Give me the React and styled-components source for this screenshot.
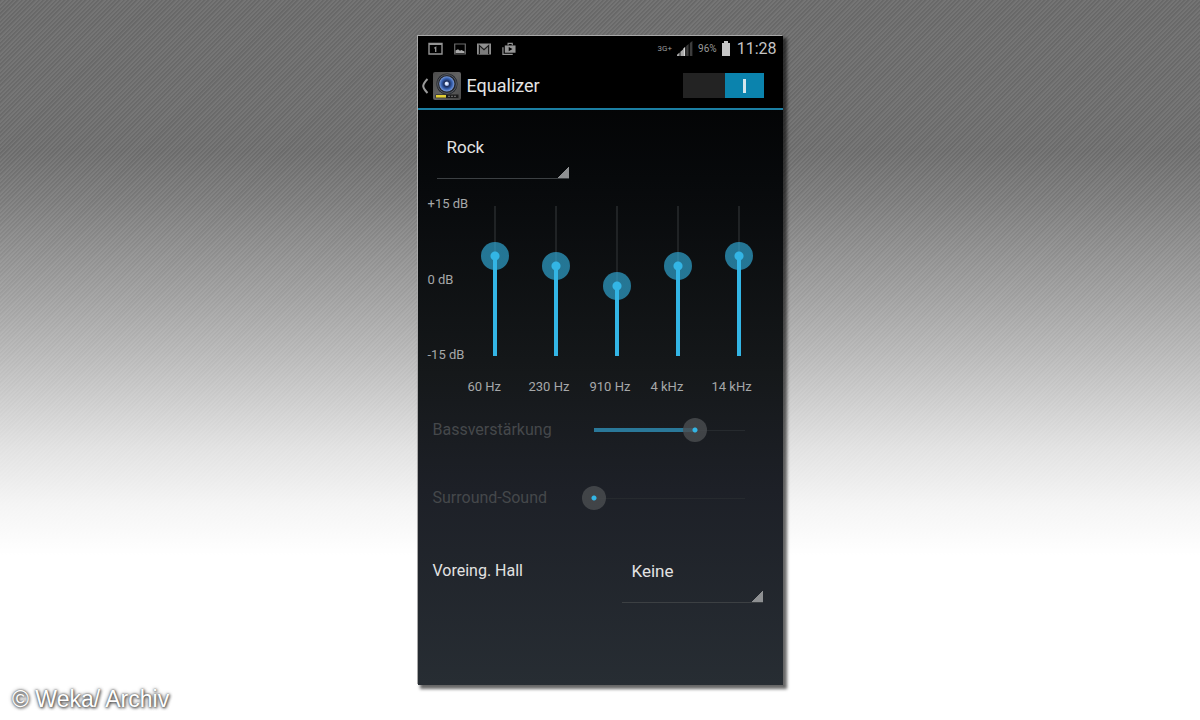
import React, { useState } from "react";
import styled, { createGlobalStyle } from "styled-components";

const GlobalStyle = createGlobalStyle`
  * {
    box-sizing: border-box;
  }
  body {
    margin: 0;
    font-family: Roboto, "Noto Sans", sans-serif;
  }
`;

const Page = styled.div`
  min-height: 100vh;
  padding: 36px 12px 8px;
  display: flex;
  flex-direction: column;
  justify-content: space-between;
  background: linear-gradient(
      rgba(255, 255, 255, 0) 0%,
      rgba(255, 255, 255, 0.02) 21%,
      rgba(255, 255, 255, 0.12) 28%,
      rgba(255, 255, 255, 0.36) 41%,
      rgba(255, 255, 255, 0.52) 49%,
      rgba(255, 255, 255, 0.8) 62%,
      rgba(255, 255, 255, 0.93) 70%,
      rgba(255, 255, 255, 1) 77%
    ),
    repeating-linear-gradient(
      135deg,
      #686868 0,
      #686868 1px,
      #757575 2px,
      #757575 3px
    );
`;
const Phone = styled.main`
  width: 100%;
  max-width: 365px;
  margin: 0 auto;
  background: linear-gradient(#000 0%, #07090b 22%, #15181a 52%, #1d2027 70%, #272d33 100%);
  box-shadow: -1px -1px 0 #a8a8a8, 3px 3px 3px 1px rgba(0, 0, 0, 0.6);
`;
const StatusBar = styled.div`
  height: 25px;
  padding: 0 6px 0 10px;
  display: flex;
  align-items: center;
  justify-content: space-between;
  background: #000;
`;
const StatusGroup = styled.div`
  display: flex;
  align-items: center;
  gap: ${(props) => props.$gap}px;
  color: #949494;
`;
const StatusText = styled.span`
  font-size: ${(props) => (props.$small ? 8 : 10)}px;
  line-height: 24px;
  color: #9a9a9a;
`;
const Clock = styled.time`
  margin-left: 2px;
  font-size: 16px;
  line-height: 24px;
  color: #c4c4c4;
`;
const ActionBar = styled.header`
  height: 49px;
  padding: 2px 19px 0 3px;
  display: flex;
  align-items: center;
  background: #000;
  border-bottom: 2px solid #1b7fa3;
`;
const BackButton = styled.button`
  display: flex;
  align-items: center;
  gap: 3px;
  padding: 0;
  border: none;
  background: none;
`;
const Title = styled.h1`
  flex: 1;
  margin: 0 0 0 6px;
  font-size: 18px;
  font-weight: 400;
  line-height: 24px;
  color: #e4e4e4;
`;
const Switch = styled.input`
  appearance: none;
  width: 81px;
  height: 25px;
  margin: 0;
  display: flex;
  justify-content: ${(props) => (props.checked ? "flex-end" : "flex-start")};
  background: #232323;

  &::before {
    content: "";
    width: 39px;
    background: linear-gradient(#d4e6ec, #d4e6ec) center / 3px 14px no-repeat,
      ${(props) => (props.checked ? "#0b83ad" : "#555")};
  }
`;
const Body = styled.div`
  padding: 24px 10px 82px;
`;
const Spinner = styled.select`
  appearance: none;
  display: block;
  width: ${(props) => props.$width}px;
  height: 45px;
  margin: 0;
  padding: 0 12px 18px 10px;
  border: none;
  border-bottom: 1px solid #3c4043;
  border-radius: 0;
  outline: none;
  background: linear-gradient(135deg, transparent 50%, #8e9092 54%) right bottom /
    12px 12px no-repeat;
  font-family: inherit;
  font-size: 17px;
  color: #e2e2e2;

  option {
    background: #1d2027;
  }
`;
const PresetRow = styled.div`
  padding-left: 9px;
  margin-bottom: 13px;
`;
const Bands = styled.div`
  display: flex;
`;
const Scale = styled.div`
  width: 40px;
  height: 175px;
  display: flex;
  flex-direction: column;
  justify-content: space-between;
  font-size: 13px;
  line-height: 24px;
  white-space: nowrap;
  color: #a6a8a9;
`;
const Band = styled.label`
  width: 61px;
  display: flex;
  flex-direction: column;
  font-size: 13px;
  line-height: 34px;
  color: #a6a8a9;
`;
const BandSlider = styled.input`
  appearance: none;
  writing-mode: vertical-lr;
  direction: rtl;
  width: 28px;
  height: 178px;
  margin: 0 0 0 13px;
  background: linear-gradient(#33b5e5, #33b5e5) center bottom 14px / 4px
      calc(var(--level) * 150px) no-repeat,
    linear-gradient(#202325, #202325) center / 2px 150px no-repeat;

  &::-webkit-slider-thumb {
    appearance: none;
    width: 28px;
    height: 28px;
    border-radius: 50%;
    background: radial-gradient(
      circle,
      #33b5e5 4px,
      rgba(51, 181, 229, 0.62) 5px
    );
  }
`;
const EffectRow = styled.div`
  height: ${(props) => props.$height}px;
  padding-left: 5px;
  display: flex;
  align-items: center;
`;
const EffectLabel = styled.label`
  width: ${(props) => (props.$wide ? 189 : 149)}px;
  font-size: 16px;
  line-height: 26px;
  color: ${(props) => (props.$dim ? "#45484b" : "#e2e2e2")};
`;
const EffectSlider = styled.input`
  appearance: none;
  width: 175px;
  height: 24px;
  margin: 0;
  background: linear-gradient(#2a7899, #2a7899) left 12px center /
      calc(var(--level) * 151px) 4px no-repeat,
    linear-gradient(#262a2e, #262a2e) center / 151px 1px no-repeat;

  &::-webkit-slider-thumb {
    appearance: none;
    width: 24px;
    height: 24px;
    border-radius: 50%;
    background: radial-gradient(
      circle,
      #33b5e5 1px,
      #33b5e5 2px,
      rgba(74, 77, 80, 0.8) 3px
    );
  }
`;
const ReverbRow = styled.div`
  margin-top: 18px;
  padding-left: 5px;
  display: flex;
  align-items: flex-start;
`;
const Credit = styled.footer`
  font-family: "Liberation Sans", Arial, sans-serif;
  font-size: 23px;
  line-height: 28px;
  color: #fff;
  text-shadow: 0 0 2px #555, 1px 1px 3px #444, 0 0 4px #888;
`;

function CalendarIcon() {
  return (
    <svg width="15" height="13" viewBox="0 0 15 13" fill="none" aria-hidden="true">
      <path d="M1 1.5h13v10.5H1z" stroke="currentColor" strokeWidth="1.4" />
      <path d="M1 1h13v2H1z" fill="currentColor" />
      <path d="M6.3 6.2l1.4-.8V10" stroke="currentColor" strokeWidth="1.3" />
    </svg>
  );
}

function PictureIcon() {
  return (
    <svg width="12" height="12" viewBox="0 0 12 12" fill="none" aria-hidden="true">
      <path d="M.7 1h10.6v10H.7z" stroke="#6c6c6c" strokeWidth="1.2" />
      <path d="M1.5 10V7.6L4 6.2l2 1.6 1.4-.8 3.1 1.4V10z" fill="#aaa" />
    </svg>
  );
}

function MailIcon() {
  return (
    <svg width="14" height="12" viewBox="0 0 14 12" aria-hidden="true">
      <path d="M0 .5h14v11H0z" fill="#8f8f8f" />
      <path d="M2.6 11.5V3.4L7 7.2l4.4-3.8v8.1z" fill="#7c7c7c" />
      <path d="M2.4 11V2.6L7 6.8l4.6-4.2V11" fill="none" stroke="#1b1b1b" strokeWidth="1.2" />
    </svg>
  );
}

function PlayStoreIcon() {
  return (
    <svg width="14" height="14" viewBox="0 0 15 14" fill="none" aria-hidden="true">
      <path d="M1 5v7.8h10.5" stroke="currentColor" strokeWidth="1.3" />
      <path d="M3 3.2h11.5v7.8H3z" fill="currentColor" />
      <path d="M6.5 3V1h4.5v2" stroke="currentColor" strokeWidth="1.2" />
      <path d="M7.2 4.8v4.6l4-2.3z" fill="#000" />
    </svg>
  );
}

function SignalIcon() {
  return (
    <svg width="16" height="15" viewBox="0 0 16 15" aria-hidden="true">
      <path d="M0 15h2.6v-3.4L0 13.8zM3.4 15H6V8.4l-2.6 2.4z" fill="#a8a8a8" />
      <path d="M6.2 15h2V5.8l-2 2z" fill="#d8d8d8" />
      <path d="M9.2 15h2.4V3L9.2 5zM12.8 15h2.6V0l-2.6 2z" fill="#3d3d3d" />
    </svg>
  );
}

function BatteryIcon() {
  return (
    <svg width="8" height="15" viewBox="0 0 8 15" aria-hidden="true">
      <path d="M2 0h4v2h2v13H0V2h2z" fill="#c6c6c6" />
    </svg>
  );
}

function BackIcon() {
  return (
    <svg width="9" height="16" viewBox="0 0 9 16" fill="none" aria-hidden="true">
      <path d="M6.5 1Q2.6 5 2.2 8q.4 3 4.3 7" stroke="#999" strokeWidth="2" />
    </svg>
  );
}

function SpeakerIcon() {
  return (
    <svg width="28" height="28" viewBox="0 0 28 28" aria-hidden="true">
      <defs>
        <linearGradient id="case" x1="0" y1="0" x2="1" y2="1">
          <stop offset="0" stopColor="#4c4c4c" />
          <stop offset="0.5" stopColor="#626262" />
          <stop offset="1" stopColor="#484848" />
        </linearGradient>
        <radialGradient id="cone">
          <stop offset="0" stopColor="#dce6fa" />
          <stop offset="0.22" stopColor="#9db6e6" />
          <stop offset="0.36" stopColor="#1c2c58" />
          <stop offset="0.7" stopColor="#3560b0" />
          <stop offset="1" stopColor="#7d9cda" />
        </radialGradient>
      </defs>
      <rect width="28" height="28" rx="2" fill="url(#case)" />
      <circle cx="14" cy="12" r="10.6" fill="#23262c" />
      <circle cx="14" cy="12" r="9.4" fill="none" stroke="#70747c" strokeWidth="0.7" />
      <circle cx="13.8" cy="11.8" r="7.6" fill="url(#cone)" />
      <circle cx="13.4" cy="11.4" r="1.4" fill="#eef3ff" />
      <rect x="2.5" y="22.5" width="23" height="3.6" fill="#1c1c1c" />
      <rect x="3" y="23" width="10" height="2.6" fill="#e3cf35" />
      <path d="M15 24.3h9" stroke="#777" strokeWidth="1" strokeDasharray="2 1" />
    </svg>
  );
}

const initialBands = [
  { name: "60 Hz", gain: 5 },
  { name: "230 Hz", gain: 3 },
  { name: "910 Hz", gain: -1 },
  { name: "4 kHz", gain: 3 },
  { name: "14 kHz", gain: 5 },
];

export default function App() {
  const [enabled, setEnabled] = useState(true);
  const [bands, setBands] = useState(initialBands);
  const [bass, setBass] = useState(67);
  const [surround, setSurround] = useState(0);

  const handleBand = (index, gain) => {
    setBands(bands.map((band, i) => (i === index ? { ...band, gain } : band)));
  };

  return (
    <>
      <GlobalStyle />
      <Page>
        <Phone>
          <StatusBar>
            <StatusGroup $gap={11}>
              <CalendarIcon />
              <PictureIcon />
              <MailIcon />
              <PlayStoreIcon />
            </StatusGroup>
            <StatusGroup $gap={5}>
              <StatusText $small>3G+</StatusText>
              <SignalIcon />
              <StatusText>96%</StatusText>
              <BatteryIcon />
              <Clock>11:28</Clock>
            </StatusGroup>
          </StatusBar>
          <ActionBar>
            <BackButton aria-label="Zurück">
              <BackIcon />
              <SpeakerIcon />
            </BackButton>
            <Title>Equalizer</Title>
            <Switch
              type="checkbox"
              aria-label="Equalizer"
              checked={enabled}
              onChange={(e) => setEnabled(e.target.checked)}
            />
          </ActionBar>
          <Body>
            <PresetRow>
              <Spinner $width={132} aria-label="Preset">
                <option>Rock</option>
              </Spinner>
            </PresetRow>
            <Bands>
              <Scale>
                <span>+15 dB</span>
                <span>0 dB</span>
                <span>-15 dB</span>
              </Scale>
              {bands.map((band, i) => (
                <Band key={band.name}>
                  <BandSlider
                    type="range"
                    min="-15"
                    max="15"
                    value={band.gain}
                    style={{ "--level": (band.gain + 15) / 30 }}
                    onChange={(e) => handleBand(i, Number(e.target.value))}
                  />
                  {band.name}
                </Band>
              ))}
            </Bands>
            <EffectRow $height={52}>
              <EffectLabel htmlFor="bass" $dim>
                Bassverstärkung
              </EffectLabel>
              <EffectSlider
                id="bass"
                type="range"
                value={bass}
                style={{ "--level": bass / 100 }}
                onChange={(e) => setBass(Number(e.target.value))}
              />
            </EffectRow>
            <EffectRow $height={84}>
              <EffectLabel htmlFor="surround" $dim>
                Surround-Sound
              </EffectLabel>
              <EffectSlider
                id="surround"
                type="range"
                value={surround}
                style={{ "--level": surround / 100 }}
                onChange={(e) => setSurround(Number(e.target.value))}
              />
            </EffectRow>
            <ReverbRow>
              <EffectLabel htmlFor="reverb" $wide>
                Voreing. Hall
              </EffectLabel>
              <Spinner id="reverb" $width={141}>
                <option>Keine</option>
              </Spinner>
            </ReverbRow>
          </Body>
        </Phone>
        <Credit>© Weka/ Archiv</Credit>
      </Page>
    </>
  );
}
